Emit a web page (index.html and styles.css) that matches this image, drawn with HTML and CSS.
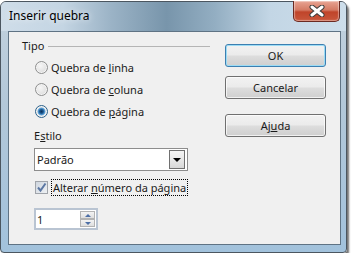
FILE: index.html
```html
<!doctype html>
<html>
<head>
    <title>Inserir quebra</title>
    <link rel="stylesheet" href="styles.css">
</head>
<body>
    <div class="window">
        <div class="titlebar">
            <span class="title">Inserir quebra</span>
            <span class="close">
                <svg width="16" height="12" viewBox="0 0 16 12">
                    <path d="M3 2 L13 10 M13 2 L3 10" stroke="#3a3a3a" stroke-width="5" stroke-linecap="round"/>
                    <path d="M3 2 L13 10 M13 2 L3 10" stroke="#ffffff" stroke-width="3" stroke-linecap="round"/>
                </svg>
            </span>
        </div>
        <div class="client">
            <div class="main">
                <div class="legend">
                    <span>Tipo</span>
                    <span class="rule"></span>
                </div>
                <label class="option"><span class="radio"></span><span>Quebra de <u>l</u>inha</span></label>
                <label class="option"><span class="radio"></span><span>Quebra de <u>c</u>oluna</span></label>
                <label class="option"><span class="radio checked"></span><span>Quebra de <u>p</u>ágina</span></label>

                <div class="field-label">E<u>s</u>tilo</div>
                <div class="select">
                    <span>Padrão</span>
                    <span class="drop"><i class="arrow-down"></i></span>
                </div>

                <label class="check-row">
                    <span class="checkbox">
                        <svg width="11" height="11" viewBox="0 0 11 11">
                            <path d="M2 5.5 L4.5 8.5 L9.5 1.5" fill="none" stroke="#5b77a3" stroke-width="2"/>
                        </svg>
                    </span>
                    <span class="focus">Alterar <u>n</u>úmero da página</span>
                </label>

                <div class="spin">
                    <span class="spin-value">1</span>
                    <span class="spin-btns">
                        <span class="spin-btn"><i class="tri-up"></i></span>
                        <span class="spin-btn"><i class="tri-down"></i></span>
                    </span>
                </div>
            </div>
            <div class="actions">
                <button class="btn default">OK</button>
                <button class="btn">Cancelar</button>
                <button class="btn help">Aj<u>u</u>da</button>
            </div>
        </div>
    </div>
</body>
</html>
```

FILE: styles.css
```css
body {
    margin: 0;
    background-color: #ffffff;
    font-family: 'Noto Sans', 'Open Sans', sans-serif;
    font-size: 11px;
    color: #1a1a1a;
}
.window {
    box-sizing: border-box;
    width: 347px;
    height: 252px;
    margin-top: 1px;
    padding: 0 5px 7px 7px;
    border: 1px solid #4b5660;
    border-radius: 6px 6px 4px 4px;
    background: linear-gradient(180deg, #c3d2de 0%, #b3c8d9 40%, #a2c2dc 100%);
    box-shadow: 2px 3px 2px rgba(0,0,0,0.55);
}
.titlebar {
    height: 29px;
    display: flex;
    justify-content: space-between;
    align-items: flex-start;
    margin: 0 -5px 0 -7px;
    padding: 0 6px 0 8px;
    border-radius: 5px 5px 0 0;
    background: linear-gradient(90deg, #cfdde9 0%, #c4d5e3 18%, #9bb3c6 32%, #7895ab 48%, #93aec2 62%, #c3d6e5 78%, #cddeeb 100%);
}
.title {
    padding-top: 6px;
    line-height: 16px;
    font-size: 12px;
    color: #000;
    text-shadow: 0 0 6px rgba(255,255,255,0.9);
}
.close {
    box-sizing: border-box;
    width: 47px;
    height: 21px;
    margin-top: -1px;
    display: flex;
    align-items: center;
    justify-content: center;
    border: 1px solid #6b2a22;
    border-top: none;
    border-radius: 0 0 5px 5px;
    background: linear-gradient(180deg, #e8a493 0%, #d47a64 45%, #c0442a 55%, #c8573c 100%);
    box-shadow: inset 0 0 1px 1px rgba(255,255,255,0.4);
}
.client {
    box-sizing: border-box;
    height: 214px;
    display: flex;
    gap: 15px;
    padding: 7px 14px 0 13px;
    border: 1px solid #5f7384;
    background-color: #f0f0f0;
}
.main {
    width: 188px;
}
.legend {
    height: 14px;
    display: flex;
    align-items: center;
    gap: 4px;
    line-height: 14px;
}
.rule {
    flex: 1;
    height: 0;
    margin-top: 1px;
    border-top: 1px solid #b5b5b5;
}
.option {
    display: flex;
    align-items: center;
    gap: 3px;
    height: 22px;
    margin-left: 13px;
}
.legend + .option {
    margin-top: 3px;
}
.radio {
    box-sizing: border-box;
    width: 13px;
    height: 13px;
    border: 1px solid #8e8f8f;
    border-radius: 50%;
    background: radial-gradient(circle at 40% 35%, #f6f6f6 0%, #e4e4e4 55%, #cfcfcf 100%);
    box-shadow: inset 0 0 0 1px #f4f4f4;
}
.radio.checked {
    border-color: #2c628b;
    background: radial-gradient(circle at 50% 50%, #0d2f57 0%, #1b5a93 25%, #6fb2e6 48%, #e3e3e3 55%, #f4f4f4 100%);
}
.field-label {
    height: 16px;
    line-height: 16px;
    margin: 6px 0 0 12px;
}
.select {
    box-sizing: border-box;
    width: 154px;
    height: 23px;
    margin: 4px 0 0 12px;
    display: flex;
    align-items: center;
    justify-content: space-between;
    padding-left: 2px;
    border: 1px solid #8d8d8d;
    background-color: #fff;
}
.drop {
    box-sizing: border-box;
    width: 16px;
    height: 19px;
    margin-right: 2px;
    display: flex;
    align-items: center;
    justify-content: center;
    border: 1px solid #707070;
    background: linear-gradient(180deg, #f4f4f4 0%, #e8e8e8 50%, #d8d8d8 100%);
}
.arrow-down {
    width: 0;
    height: 0;
    border-left: 4px solid transparent;
    border-right: 4px solid transparent;
    border-top: 4px solid #000;
}
.check-row {
    height: 17px;
    margin: 8px 0 0 13px;
    display: flex;
    align-items: center;
    gap: 3px;
}
.checkbox {
    box-sizing: border-box;
    width: 13px;
    height: 13px;
    display: flex;
    align-items: center;
    justify-content: center;
    border: 1px solid #a0a4aa;
    background: linear-gradient(135deg, #cfd6df 0%, #eef1f4 100%);
}
.focus {
    height: 17px;
    line-height: 15px;
    padding: 0 1px;
    box-sizing: border-box;
    border: 1px dotted #000;
}
.spin {
    box-sizing: border-box;
    width: 64px;
    height: 22px;
    margin: 12px 0 0 12px;
    display: flex;
    align-items: center;
    justify-content: space-between;
    padding-left: 1px;
    border: 2px solid #b9c4d2;
    background-color: #fff;
}
.spin-btns {
    display: flex;
    flex-direction: column;
    margin-right: 1px;
}
.spin-btn {
    box-sizing: border-box;
    width: 15px;
    height: 8px;
    display: flex;
    align-items: center;
    justify-content: center;
    border: 1px solid #b3b3b3;
    background: linear-gradient(180deg, #f3f3f3 0%, #dedede 100%);
}
.tri-up, .tri-down {
    width: 0;
    height: 0;
    border-left: 3px solid transparent;
    border-right: 3px solid transparent;
}
.tri-up {
    border-bottom: 3px solid #4d6fa6;
}
.tri-down {
    border-top: 3px solid #4d6fa6;
}
.actions {
    display: flex;
    flex-direction: column;
    gap: 9px;
    padding-top: 5px;
}
.btn {
    box-sizing: border-box;
    width: 101px;
    height: 23px;
    padding: 0;
    font-family: inherit;
    font-size: 11px;
    color: #1a1a1a;
    border: 1px solid #707070;
    border-radius: 3px;
    background: linear-gradient(180deg, #f2f2f2 0%, #ebebeb 48%, #dddddd 52%, #cfcfcf 100%);
    box-shadow: inset 0 0 0 1px rgba(255,255,255,0.7);
}
.btn.default {
    border-color: #3c7fb1;
    box-shadow: inset 0 0 0 1px #9cdcf5;
}
.btn.help {
    margin-top: 6px;
}
```
